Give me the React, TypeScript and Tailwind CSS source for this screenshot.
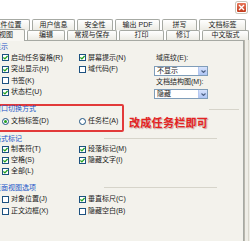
import React from "react";

const row1 = [
  { t: "文件位置", w: "w-[45px]" },
  { t: "用户信息", w: "w-[43px]" },
  { t: "安全性", w: "w-[36px]" },
  { t: "输出 PDF", w: "w-[45px]" },
  { t: "拼写", w: "w-[35px]" },
  { t: "文档标签", w: "w-[47px]" },
];

const row2 = [
  { t: "编辑", w: "w-[38px]" },
  { t: "常规与保存", w: "w-[50px]" },
  { t: "打印", w: "w-[45px]" },
  { t: "修订", w: "w-[34px]" },
  { t: "中文版式", w: "w-[47px]" },
];

function Check({ on }: { on?: boolean }) {
  return (
    <span className="w-[7px] h-[7px] border border-[#1c5180] bg-white flex items-center justify-center shrink-0">
      {on && (
        <svg width="5" height="5" viewBox="0 0 5 5">
          <path d="M0.4 2.4 L1.9 3.9 L4.6 0.9" stroke="#21a121" strokeWidth="1.3" fill="none" />
        </svg>
      )}
    </span>
  );
}

function Radio({ on }: { on?: boolean }) {
  return (
    <span className="w-[7px] h-[7px] rounded-full border border-[#1c5180] bg-white flex items-center justify-center shrink-0">
      {on && <span className="w-[3px] h-[3px] rounded-full bg-[#21a121]" />}
    </span>
  );
}

function Item({ label, on, radio }: { label: string; on?: boolean; radio?: boolean }) {
  return (
    <div className="flex items-center gap-[2px] h-full">
      {radio ? <Radio on={on} /> : <Check on={on} />}
      <span>{label}</span>
    </div>
  );
}

function Select({ value }: { value: string }) {
  return (
    <div className="w-[54px] h-[10px] border border-[#7f9db9] bg-white flex items-center">
      <span className="flex-1 pl-[2px] leading-[8px]">{value}</span>
      <span className="w-[9px] h-[8px] mr-[0px] bg-gradient-to-b from-[#d6e2fc] to-[#aec5f4] border-l border-[#b5c8f0] flex items-center justify-center">
        <svg width="5" height="3" viewBox="0 0 5 3">
          <path d="M0.5 0.5 L2.5 2.5 L4.5 0.5" stroke="#4d6185" strokeWidth="1.1" fill="none" />
        </svg>
      </span>
    </div>
  );
}

function Header({ text, line }: { text: string; line?: boolean }) {
  return (
    <div className="flex items-center h-full">
      <span className="text-[#2255c8]">{text}</span>
      {line && <div className="ml-auto mr-[26px] w-[113px] h-[2px] border-t border-[#d6d4ca] border-b-white" />}
    </div>
  );
}

export default function App() {
  return (
    <div className="w-[250px] h-[241px] overflow-hidden bg-white relative text-[7px] text-[#1a1a1a] font-['Liberation_Sans','Noto_Sans_CJK_SC',sans-serif]">
      {/* title strip */}
      <div className="h-[19px] flex justify-end items-start pt-[2px] pr-[3px]">
        <div className="w-[11px] h-[11px] rounded-[2px] border border-white bg-gradient-to-b from-[#e8775a] to-[#c2391a] flex items-center justify-center shadow-[0_0_0_1px_#c9c4b8]">
          <svg width="7" height="7" viewBox="0 0 7 7">
            <path d="M1 1 L6 6 M6 1 L1 6" stroke="white" strokeWidth="1.4" />
          </svg>
        </div>
      </div>

      {/* tabs row 1 */}
      <div className="flex gap-[2px] ml-[-15px] h-[11px]">
        {row1.map((tab) => (
          <div
            key={tab.t}
            className={`${tab.w} shrink-0 h-full border border-b-0 border-[#a6a9a3] rounded-t-[2px] bg-gradient-to-b from-white to-[#ecebe4] flex items-center justify-center`}
          >
            {tab.t}
          </div>
        ))}
      </div>

      {/* tabs row 2 */}
      <div className="flex gap-[2px] ml-[-13px] h-[10px] relative z-10">
        <div className="w-[38px] shrink-0 h-[12px] -mt-[1px] border border-b-0 border-[#a6a9a3] rounded-t-[2px] bg-[#f8f7f3] flex items-center justify-center">
          视图
        </div>
        {row2.map((tab) => (
          <div
            key={tab.t}
            className={`${tab.w} shrink-0 h-full border border-b-0 border-[#a6a9a3] rounded-t-[2px] bg-gradient-to-b from-white to-[#ecebe4] flex items-center justify-center`}
          >
            {tab.t}
          </div>
        ))}
      </div>

      {/* panel */}
      <div className="ml-[-20px] w-[264px] h-[210px] border border-[#a6a9a3] bg-[#f3f2ec] pl-[13px] pt-[1px]">
        <div className="h-[10px]">
          <Header text="显示" />
        </div>
        <div className="flex">
          <div className="w-[85px] pl-[8px]">
            <div className="h-[11.5px]"><Item label="启动任务窗格(R)" on /></div>
            <div className="h-[11.5px]"><Item label="突出显示(H)" on /></div>
            <div className="h-[11.5px]"><Item label="书签(K)" /></div>
            <div className="h-[11.5px]"><Item label="状态栏(U)" on /></div>
          </div>
          <div className="w-[75px]">
            <div className="h-[11.5px]"><Item label="屏幕提示(N)" on /></div>
            <div className="h-[11.5px]"><Item label="域代码(F)" /></div>
          </div>
          <div className="flex flex-col">
            <div className="h-[11.5px] flex items-center pl-[2px]">域底纹(E):</div>
            <div className="mt-[2.5px]"><Select value="不显示" /></div>
            <div className="h-[11.5px] flex items-center pl-[2px]">文档结构图(M):</div>
            <div className="mt-[1.5px]"><Select value="隐藏" /></div>
          </div>
        </div>

        {/* window switch */}
        <div className="flex mt-[5px]">
          <div className="ml-[-4px] w-[134px] h-[28px] border-2 border-[#e23a3a] rounded-[2px] pl-[2px]">
            <div className="h-[7px] flex items-center">
              <span className="text-[#2255c8]">窗口切换方式</span>
            </div>
            <div className="h-[17px] flex pl-[8px]">
              <div className="w-[77px]"><Item label="文档标签(D)" on radio /></div>
              <Item label="任务栏(A)" radio />
            </div>
          </div>
          <div className="flex flex-col ml-[5px]">
            <div className="ml-[80px] mt-[5px] w-[30px] h-[2px] border-t border-[#d6d4ca]" />
            <div className="mt-[5px] text-[11px] leading-[12px] font-bold tracking-[0.3px] text-[#e42323] [text-shadow:1px_1px_1px_rgba(120,0,0,0.35)] font-['Noto_Sans_CJK_SC',sans-serif]">
              改成任务栏即可
            </div>
          </div>
        </div>

        {/* format marks */}
        <div className="h-[10px] mt-[2px]">
          <Header text="格式标记" line />
        </div>
        <div className="pl-[8px]">
          <div className="h-[11px] flex">
            <div className="w-[77px]"><Item label="制表符(T)" on /></div>
            <Item label="段落标记(M)" on />
          </div>
          <div className="h-[11px] flex">
            <div className="w-[77px]"><Item label="空格(S)" on /></div>
            <Item label="隐藏文字(I)" on />
          </div>
          <div className="h-[11px] flex">
            <div className="w-[77px]"><Item label="全部(L)" on /></div>
          </div>
        </div>

        {/* page view */}
        <div className="h-[10px] mt-[6px]">
          <Header text="页面视图选项" line />
        </div>
        <div className="pl-[8px]">
          <div className="h-[12px] flex">
            <div className="w-[77px]"><Item label="对象位置(J)" /></div>
            <Item label="垂直标尺(C)" on />
          </div>
          <div className="h-[12px] flex">
            <div className="w-[77px]"><Item label="正文边框(X)" /></div>
            <Item label="隐藏空白(B)" />
          </div>
        </div>
      </div>

      {/* right frame */}
      <div className="absolute top-[40px] right-0 w-[6px] h-[201px] bg-[#efeee7] border-l border-[#b9b7ad]">
        <div className="ml-[3px] w-[1px] h-full bg-[#d9d7cd]" />
      </div>
    </div>
  );
}
